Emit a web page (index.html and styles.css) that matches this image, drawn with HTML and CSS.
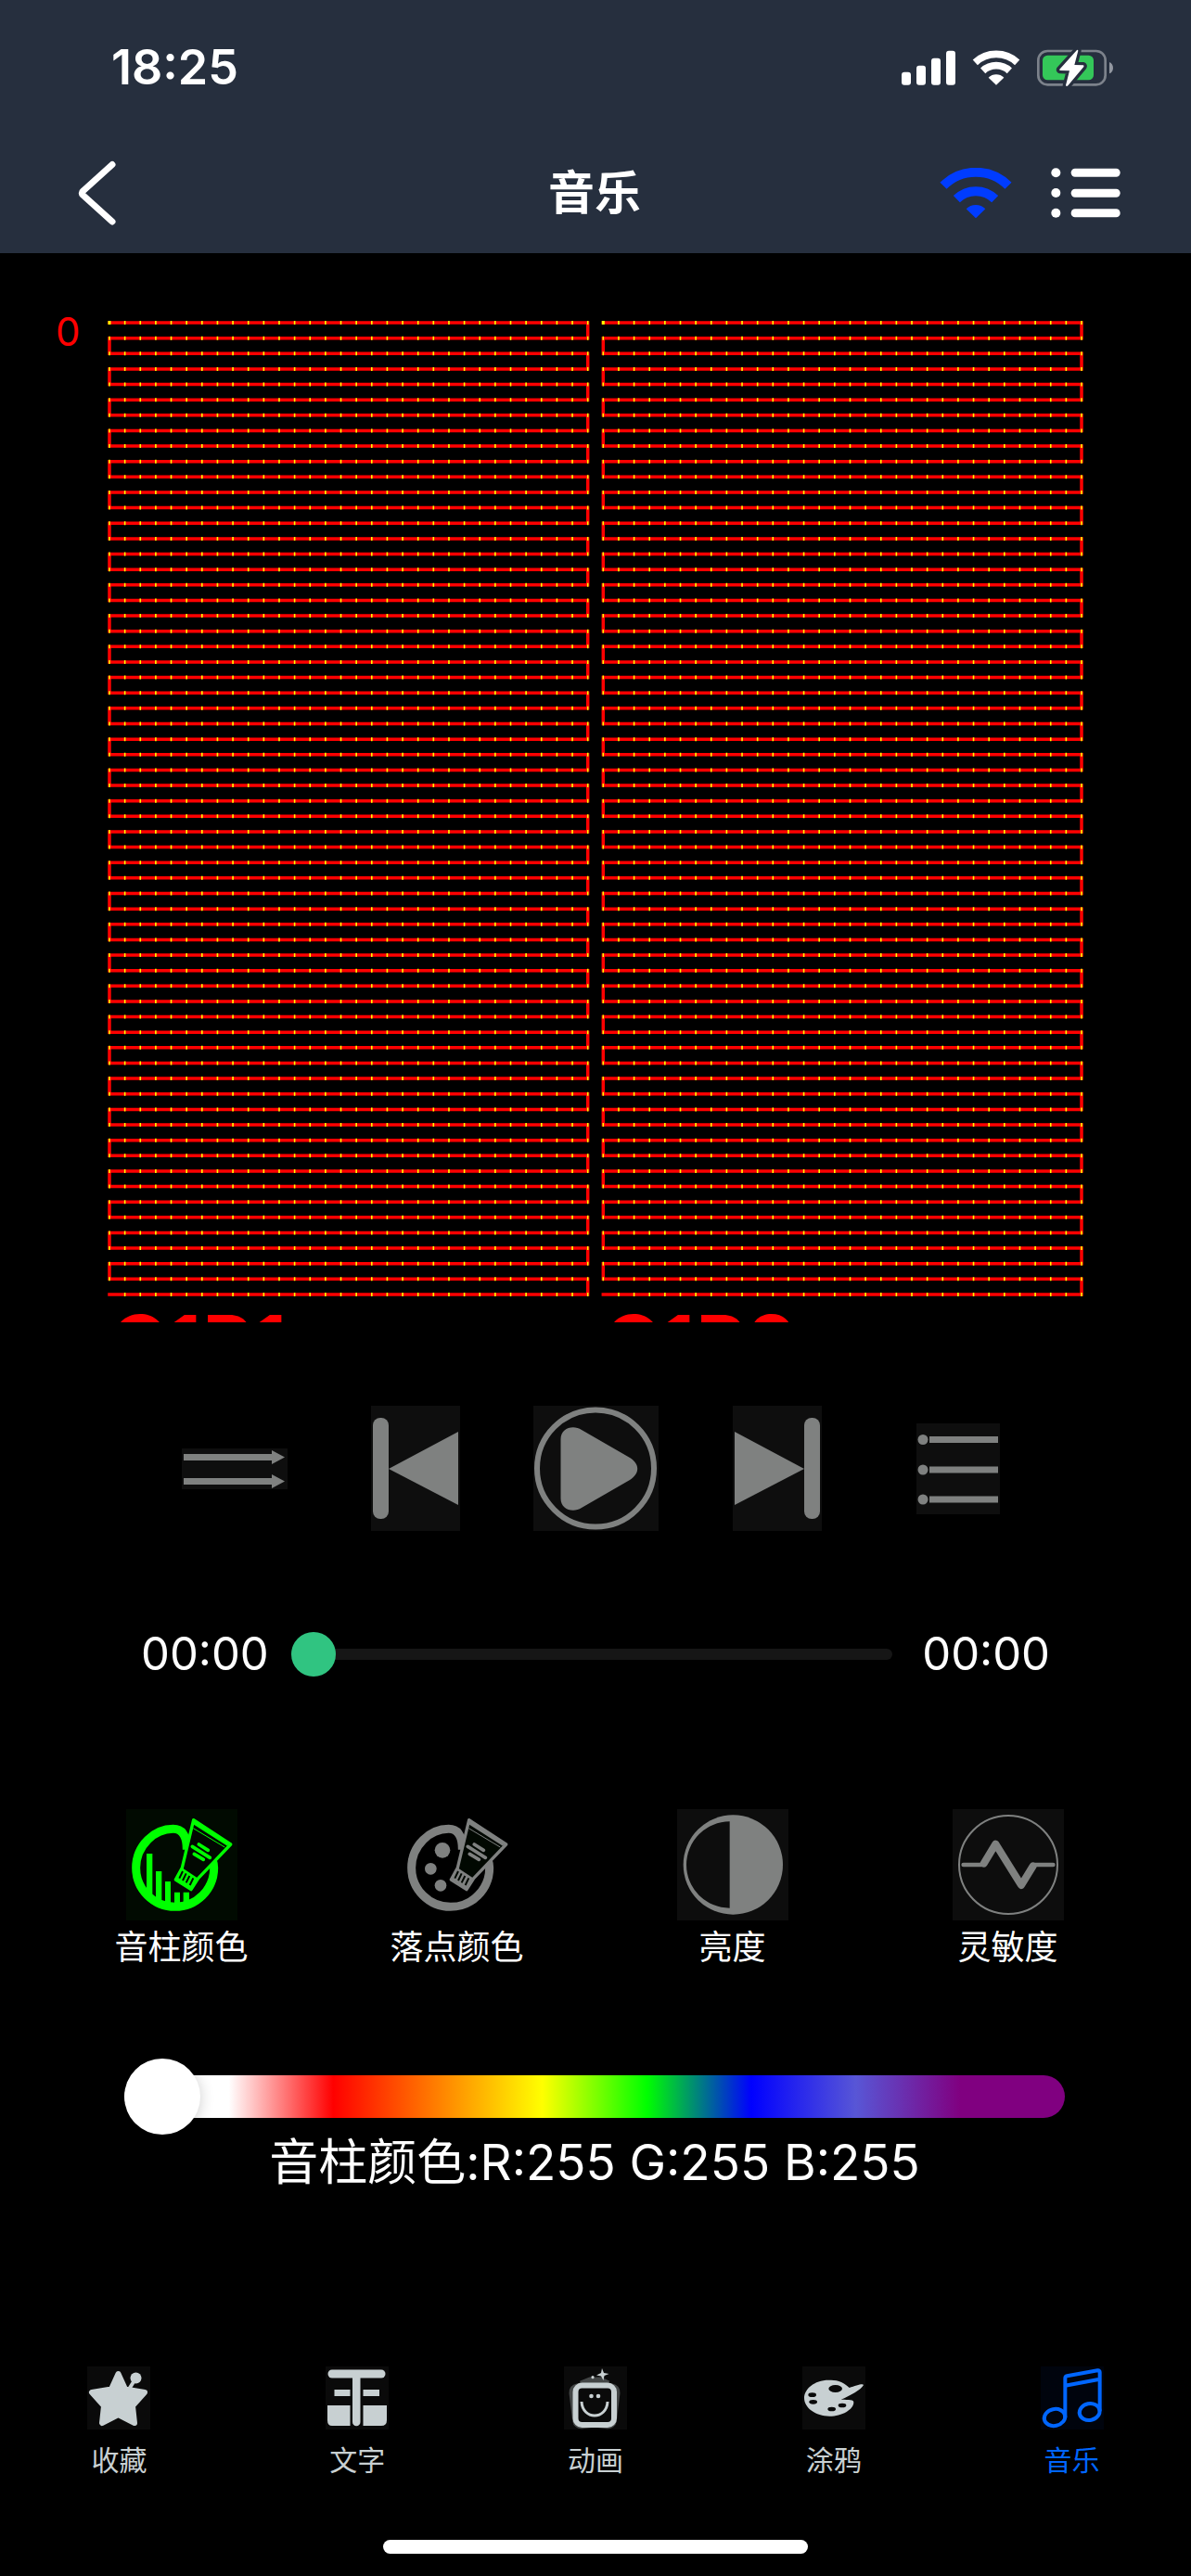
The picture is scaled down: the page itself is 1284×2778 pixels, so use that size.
FILE: index.html
```html
<!DOCTYPE html>
<html lang="zh-CN">
<head>
<meta charset="utf-8">
<meta name="viewport" content="width=device-width, initial-scale=1">
<title>音乐</title>
<link rel="stylesheet" href="styles.css">
</head>
<body>
<header class="header">
  <div class="status">
    <span class="clock">18:25</span>
    <div class="status-icons">
      <svg width="58" height="38" viewBox="99 70 174 114" fill="#fff" aria-hidden="true">
        <rect x="99" y="141" width="30" height="42" rx="9"/><rect x="147" y="120" width="30" height="63" rx="9"/><rect x="195" y="96" width="30" height="87" rx="9"/><rect x="243" y="72" width="30" height="111" rx="9"/>
      </svg>
      <svg width="52" height="38" viewBox="329 71 156 114" fill="none" stroke="#fff" stroke-width="23" aria-hidden="true">
        <path d="M339 111A100 100 0 0 1 475 111M364 138A63 63 0 0 1 450 138"/>
        <path stroke="none" fill="#fff" d="M407 184L382 160A36 36 0 0 1 432 160Z"/>
      </svg>
      <svg width="82" height="42" viewBox="540 64 246 126" aria-hidden="true">
        <rect x="544" y="73" width="217" height="109" rx="30" fill="none" stroke="#7c828b" stroke-width="8"/>
        <rect x="558" y="87" width="165" height="80" rx="16" fill="#34c759"/>
        <path d="M774 109C790 114 790 141 774 146Z" fill="#9297a0"/>
        <path d="M669 70L613 132Q611 135 615 136L645 137L633 184Q635 190 640 185L691 124Q693 120 689 119L661 118L673 72Q672 67 669 70Z" fill="#262f3e" stroke="#262f3e" stroke-width="20" stroke-linejoin="round"/>
        <path d="M669 70L613 132Q611 135 615 136L645 137L633 184Q635 190 640 185L691 124Q693 120 689 119L661 118L673 72Q672 67 669 70Z" fill="#fff"/>
      </svg>
    </div>
  </div>
  <nav class="navbar">
    <button class="icon-button back" aria-label="返回">
      <svg width="42" height="70" viewBox="0 0 42 70" fill="none" stroke="#fff" stroke-width="7" stroke-linecap="round" stroke-linejoin="round"><path d="M38 4.500L6.500 33Q4 35 6.500 37.500L38 66"/></svg>
    </button>
    <h1 class="title">音乐</h1>
    <div class="nav-actions">
      <button class="icon-button" aria-label="连接">
        <svg width="78" height="54" viewBox="222 453 234 162" fill="none" stroke="#003cff" stroke-width="30"><path d="M234 511A148 148 0 0 1 444 511M277 554A88 88 0 0 1 401 554"/><path stroke="none" fill="#003cff" d="M339 616L308 586A43 43 0 0 1 370 586Z"/></svg>
      </button>
      <button class="icon-button" aria-label="列表">
        <svg width="75" height="54" viewBox="582 452 225 162" fill="#fff"><circle cx="598" cy="468" r="15"/><circle cx="598" cy="533" r="15"/><circle cx="598" cy="598" r="15"/><rect x="647" y="454" width="159" height="27" rx="13"/><rect x="647" y="520" width="159" height="27" rx="13"/><rect x="647" y="585" width="159" height="27" rx="13"/></svg>
      </button>
    </div>
  </nav>
</header>

<main class="main">
  <svg class="matrix" viewBox="0 0 1284 1153" role="img" aria-label="灯带走线图">
    <text class="matrix-index" x="60" y="100">0</text>
    <g id="boards"></g>
    <text class="matrix-port" x="118" y="1208">C1P1</text>
    <text class="matrix-port" x="650" y="1208">C1P2</text>
  </svg>

  <section class="controls" aria-label="播放控制">
    <button class="icon-button" aria-label="顺序播放">
      <svg class="plate" width="114" height="44" viewBox="0 0 114 44"><path d="M2 6H97V2L111 9.500L97 17V13H2ZM2 32H97V28L111 35.500L97 43V39H2Z"/></svg>
    </button>
    <button class="icon-button" aria-label="上一首">
      <svg class="plate" width="96" height="135" viewBox="0 0 96 135"><rect x="2" y="13" width="17" height="109" rx="8"/><path d="M19 68L94 28V107Z"/></svg>
    </button>
    <button class="icon-button" aria-label="播放">
      <svg class="plate" width="135" height="135" viewBox="0 0 135 135"><circle cx="67" cy="67.500" r="63" fill="none" stroke="#7f8180" stroke-width="6"/><path d="M29.500 36C29.500 24 43 20 52 26L104 56C115 63 115 73 104 80L52 110C43 116 29.500 112 29.500 100Z"/></svg>
    </button>
    <button class="icon-button" aria-label="下一首">
      <svg class="plate" width="96" height="135" viewBox="0 0 96 135"><rect x="77" y="13" width="17" height="109" rx="8"/><path d="M77 68L2 28V107Z"/></svg>
    </button>
    <button class="icon-button" aria-label="播放列表">
      <svg class="plate" width="90" height="98" viewBox="0 0 90 98"><circle cx="7" cy="17.500" r="5.500"/><circle cx="7" cy="50" r="5.500"/><circle cx="7" cy="82" r="5.500"/><path d="M14 14H88V21H14ZM14 46.500H88V53.500H14ZM14 78.500H88V85.500H14Z"/></svg>
    </button>
  </section>

  <div class="progress">
    <span class="time">00:00</span>
    <input class="seek" type="range" min="0" max="100" value="0" aria-label="播放进度">
    <span class="time time-total">00:00</span>
  </div>

  <section class="options" aria-label="效果设置">
    <button class="option">
      <svg class="option-icon option-icon-active" width="120" height="120" viewBox="108 63 360 360">
        <defs>
          <g id="palette-tube">
            <path d="M387 226Q392 240 392 253A126 126 0 0 1 140 253C140 180 200 127 260 127C288 127 304 148 304 194" fill="none" stroke="currentColor" stroke-width="27"/>
            <path d="M326 98L446 177L341 287L318 323L268 291L289 253Z" fill="#010801" stroke="currentColor" stroke-width="10" stroke-linejoin="round"/>
            <path d="M325 106L438 178" stroke="currentColor" stroke-width="10"/>
            <path d="M325 125L427 186" stroke="currentColor" stroke-width="3"/>
            <path d="M343 177L373 196M322 184L379 220M328 208L358 226" stroke="currentColor" stroke-width="11" stroke-linecap="round"/>
            <path d="M289 253L341 287L318 323L268 291Z" fill="currentColor"/>
            <path d="M291 264L280 287M302 271L291 294M313 279L302 301M325 286L314 309" stroke="#010801" stroke-width="6"/>
          </g>
        </defs>
        <path d="M174 207H193V338H174ZM204 264H223V362H204ZM234 297H252V374H234ZM264 332H282V378H264ZM293 332H312V374H293Z" fill="currentColor"/>
        <use href="#palette-tube"/>
      </svg>
      <span>音柱颜色</span>
    </button>
    <button class="option">
      <svg class="option-icon option-icon-bare" width="120" height="120" viewBox="108 63 360 360"><g fill="currentColor"><circle cx="240" cy="196" r="25"/><circle cx="202" cy="256" r="19"/><circle cx="234" cy="310" r="19"/></g><use href="#palette-tube"/></svg>
      <span>落点颜色</span>
    </button>
    <button class="option">
      <svg class="option-icon" width="120" height="120" viewBox="90 63 360 360"><circle cx="271" cy="243" r="161" fill="currentColor"/><path d="M260 103A140 140 0 0 0 260 383Z" fill="#0d0d0d"/></svg>
      <span>亮度</span>
    </button>
    <button class="option">
      <svg class="option-icon" width="120" height="120" viewBox="981 63 360 360" fill="none" stroke="currentColor" stroke-linecap="round" stroke-linejoin="round"><circle cx="1161" cy="243" r="159" stroke-width="6"/><path d="M1016 243H1080M1243 243H1306" stroke-width="14"/><path d="M1082 239L1120 176L1203 309L1241 247" stroke-width="24"/></svg>
      <span>灵敏度</span>
    </button>
  </section>

  <div class="color-picker">
    <input class="hue" id="hue" type="range" min="0" max="100" value="0">
    <label class="hue-label" for="hue">音柱颜色:R:255 G:255 B:255</label>
  </div>
</main>

<footer class="footer">
  <nav class="tabs">
    <a class="tab" href="#favorites">
      <svg class="tab-icon" width="68" height="68" viewBox="0 0 68 68" fill="currentColor"><path d="M33.500 8L41 24.500L62 28L49 42.500L51 61L33.500 52L16 61L18 42.500L5 28L26 24.500Z" stroke="currentColor" stroke-width="6" stroke-linejoin="round"/><circle cx="52.500" cy="12.500" r="6"/><path d="M51 15L46 23" stroke="currentColor" stroke-width="4"/></svg>
      <span>收藏</span>
    </a>
    <a class="tab" href="#text">
      <svg class="tab-icon" width="68" height="68" viewBox="0 0 68 68" fill="currentColor"><rect x="2.500" y="3.500" width="62" height="9" rx="4.500"/><path d="M29 10H37.500V60A4.250 4.250 0 0 1 29 60ZM9.500 25H26.500V32H9.500ZM40.500 25H58V32H40.500ZM2 42H26.500V64H7Q2 64 2 58ZM40.500 42H66V58Q66 64 60 64H40.500Z"/></svg>
      <span>文字</span>
    </a>
    <a class="tab" href="#animation">
      <svg class="tab-icon" width="68" height="68" viewBox="0 0 68 68" fill="none" stroke="currentColor"><g stroke-width="5" opacity="0.3"><rect x="12" y="19" width="42" height="44" rx="7" transform="rotate(-7 33 60)"/><rect x="12" y="19" width="42" height="44" rx="7" transform="rotate(7 33 60)"/><path d="M18 18L28 14H40L48 18"/></g><rect x="12.500" y="20.500" width="41.500" height="42.500" rx="7" stroke-width="6" fill="#0a0a0a"/><path d="M19 38C20 58 46 58 47 38" stroke-width="3"/><g fill="currentColor" stroke="none"><circle cx="29.500" cy="32" r="2.300"/><circle cx="37" cy="32" r="2.300"/><circle cx="31" cy="11.700" r="1.600"/><path d="M41 2L43 7L48.500 8L43.500 10L42.500 15L40 10.500L35 9.500L40 7Z"/></g></svg>
      <span>动画</span>
    </a>
    <a class="tab" href="#doodle">
      <svg class="tab-icon" width="68" height="68" viewBox="312 66 204 204"><path d="M464 135C440 112 420 110 397 110C350 110 318 140 318 168C318 200 355 227 400 227C440 227 478 205 478 182C478 172 465 174 437 173C465 162 504 140 510 126C508 120 485 128 464 135Z" fill="currentColor"/><g fill="#0a0a0a"><ellipse cx="419" cy="138" rx="22" ry="12"/><ellipse cx="344" cy="158" rx="13" ry="7"/><ellipse cx="347" cy="181" rx="13" ry="7"/><ellipse cx="407" cy="204" rx="13" ry="7"/><ellipse cx="441" cy="192" rx="13" ry="7"/></g></svg>
      <span>涂鸦</span>
    </a>
    <a class="tab tab-active" href="#music" aria-current="page">
      <svg class="tab-icon" width="68" height="68" viewBox="1083 66 204 204" fill="none" stroke="currentColor" stroke-width="12"><path d="M1162 231V105Q1162 98 1168 97L1267 79Q1274 78 1274 85V211M1162 128L1274 107"/><ellipse cx="1128" cy="231" rx="34" ry="27" transform="rotate(-12 1128 231)"/><ellipse cx="1241" cy="213" rx="33" ry="27" transform="rotate(-12 1241 213)"/></svg>
      <span>音乐</span>
    </a>
  </nav>
  <div class="home-indicator"></div>
</footer>
<script src="matrix.js"></script>
</body>
</html>
```
FILE: styles.css
```css
* {
  box-sizing: border-box;
}

body {
  margin: 0;
  min-height: 100vh;
  display: flex;
  flex-direction: column;
  background: #000;
  color: #fff;
  font-family: Inter, "Noto Sans CJK SC", sans-serif;
}

svg {
  display: block;
}

button {
  margin: 0;
  padding: 0;
  border: 0;
  background: none;
  color: inherit;
  font: inherit;
}

/* Header */

.header {
  background: #262f3e;
}

.status {
  display: flex;
  align-items: center;
  justify-content: space-between;
  height: 146px;
  padding: 0 84px 0 120px;
}

.clock {
  font-size: 52px;
  font-weight: 600;
  line-height: 60px;
}

.status-icons {
  display: flex;
  align-items: center;
  gap: 18px;
}

.navbar {
  display: grid;
  grid-template-columns: 1fr auto 1fr;
  align-items: center;
  height: 127px;
  padding: 0 76px 4px 74px;
}

.back {
  justify-self: start;
  padding-left: 9px;
}

.title {
  margin: 0;
  font-size: 50px;
  font-weight: 600;
  line-height: 60px;
}

.nav-actions {
  display: flex;
  justify-content: flex-end;
  gap: 42px;
}

/* Wiring diagram */

.matrix {
  width: 100%;
  height: auto;
  overflow: hidden;
}

.matrix-index {
  fill: #f00;
  font-size: 42px;
}

.matrix-port {
  fill: #f00;
  font-size: 86px;
  font-weight: 600;
}

.wire {
  fill: none;
  stroke: #f00;
  stroke-width: 3.5px;
  stroke-linecap: square;
}

.pixels {
  fill: none;
  stroke: #ff0;
  stroke-width: 4px;
}

/* Player */

.controls {
  display: grid;
  grid-template-columns: repeat(5, 1fr);
  place-items: center;
  padding: 90px 153px 0 155px;
}

.plate {
  background: #0e0e0e;
  fill: #7f8180;
}

.progress {
  display: flex;
  align-items: center;
  gap: 24px;
  margin-top: 103px;
  padding: 0 152px;
}

.time {
  font-size: 49px;
  line-height: 60px;
}

.time-total {
  padding-left: 8px;
}

input[type="range"] {
  appearance: none;
  margin: 0;
  min-width: 0;
  background: none;
}

.seek {
  flex: 1;
  height: 48px;
}

.seek::-webkit-slider-runnable-track {
  height: 12px;
  border-radius: 6px;
  background: #161616;
}

.seek::-webkit-slider-thumb {
  appearance: none;
  width: 48px;
  height: 48px;
  margin-top: -18px;
  border-radius: 50%;
  background: #30c481;
}

/* Effect options */

.options {
  display: grid;
  grid-template-columns: repeat(4, 1fr);
  margin-top: 137px;
  padding: 0 49px 0 47px;
}

.option {
  display: flex;
  flex-direction: column;
  align-items: center;
  gap: 5px;
  font-size: 36px;
  line-height: 48px;
}

.option-icon {
  background: #0d0d0d;
  color: #7f8180;
}

.option-icon-active {
  background: #010a01;
  color: #0f0;
}

.option-icon-bare {
  background: none;
}

.color-picker {
  display: flex;
  flex-direction: column;
  align-items: center;
  margin-top: 96px;
  padding: 0 136px 0 134px;
}

.hue {
  width: 100%;
  height: 82px;
}

.hue::-webkit-slider-runnable-track {
  height: 46px;
  border-radius: 23px;
  background: linear-gradient(to right, #fff, #fff, #f00, #ff8000, #ff0, #0f0, #00f, #5856d6, #800080, #800080);
}

.hue::-webkit-slider-thumb {
  appearance: none;
  width: 82px;
  height: 82px;
  margin-top: -18px;
  border-radius: 50%;
  background: #fff;
  box-shadow: 0 2px 16px rgba(0, 0, 0, 0.2);
}

.hue-label {
  font-size: 53px;
  line-height: 60px;
}

/* Tab bar */

.footer {
  margin-top: auto;
  padding: 0 0 24px;
}

.tabs {
  display: grid;
  grid-template-columns: repeat(5, 1fr);
}

.tab {
  display: flex;
  flex-direction: column;
  align-items: center;
  gap: 18px;
  color: #c8d0d2;
  font-size: 30px;
  line-height: 30px;
  text-decoration: none;
}

.tab-icon {
  background: #0a0a0a;
}

.tab-active {
  color: #0066ff;
}

.tab-active .tab-icon {
  background: #00040d;
}

.home-indicator {
  width: 36%;
  max-width: 458px;
  height: 15px;
  margin: 71px auto 0;
  border-radius: 8px;
  background: #fff;
}
```
FILE: matrix.js
```js
// Draws each board as one wire that snakes through its pixels.
const ROWS = 64;
const COLS = 32;
const STEP = 1048 / 63;
const TOP = 75;
const LEFT = 118;
const BOARDS = 2;

const NS = "http://www.w3.org/2000/svg";
const group = document.getElementById("boards");

function addPath(className, d) {
  const path = document.createElementNS(NS, "path");
  path.setAttribute("class", className);
  path.setAttribute("d", d);
  group.appendChild(path);
}

for (let board = 0; board < BOARDS; board++) {
  const x0 = LEFT + board * COLS * STEP;
  const x1 = x0 + (COLS - 1) * STEP;
  let wire = "";
  let pixels = "";
  for (let row = 0; row < ROWS; row++) {
    const y = TOP + row * STEP;
    const forward = row % 2 === 0;
    wire += (row ? "L" : "M") + (forward ? x0 : x1) + " " + y;
    wire += "L" + (forward ? x1 : x0) + " " + y;
    for (let col = 0; col < COLS; col++) {
      const x = x0 + col * STEP;
      const last = row === ROWS - 1 && col === 0;
      if (!last) {
        const half = row === 0 && col === 0 ? 1.5 : 0.8;
        pixels += "M" + (x - half) + " " + y + "h" + 2 * half;
      }
    }
  }
  addPath("wire", wire);
  addPath("pixels", pixels);
}
```
